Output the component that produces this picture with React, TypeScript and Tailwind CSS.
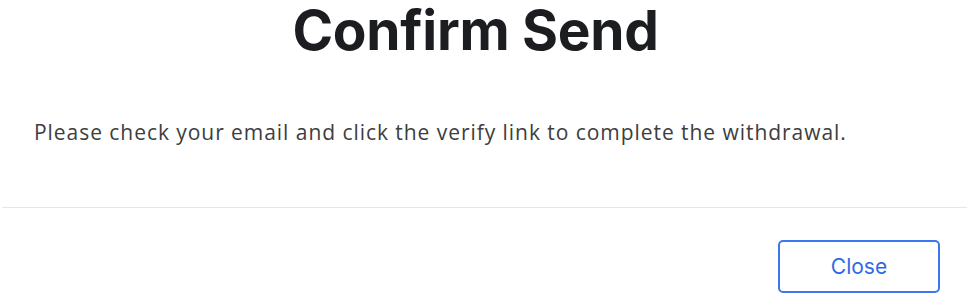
export default function App() {
  return (
    <div className="w-[975px] h-[297px] bg-white overflow-hidden flex flex-col" style={{ fontFamily: "Inter, 'Liberation Sans', sans-serif" }}>
      {/* Title */}
      <h1 className="text-center text-[55px] leading-[60px] font-bold text-[#1c1d21] tracking-[-0.3px] pr-[24px]">
        Confirm Send
      </h1>

      {/* Message */}
      <p
        className="mt-[60px] pl-[34px] text-[21px] leading-[24px] text-[#3d3d40] tracking-[0.95px]"
        style={{ fontFamily: "'Open Sans', Lato, sans-serif" }}
      >
        Please check your email and click the verify link to complete the withdrawal.
      </p>

      <div className="mt-[63px] ml-[2px] w-[965px] h-px bg-[#e6e6e6]" />

      {/* Footer */}
      <div className="flex justify-end pr-[35px] pt-[32px]">
        <button className="w-[162px] h-[53px] rounded-[5px] border-2 border-[#3b78f0] text-[#2e6ae6] text-[21px] bg-white">
          Close
        </button>
      </div>
    </div>
  );
}
